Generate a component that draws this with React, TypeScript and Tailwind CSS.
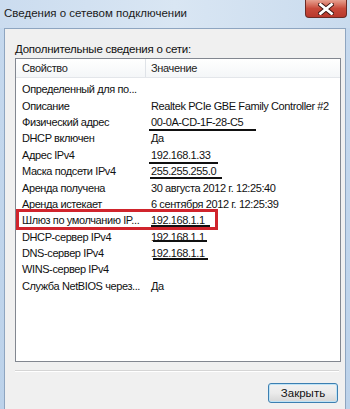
import React from "react";

const rows: [string, string][] = [
  ["Определенный для по...", ""],
  ["Описание", "Realtek PCIe GBE Family Controller #2"],
  ["Физический адрес", "00-0A-CD-1F-28-C5"],
  ["DHCP включен", "Да"],
  ["Адрес IPv4", "192.168.1.33"],
  ["Маска подсети IPv4", "255.255.255.0"],
  ["Аренда получена", "30 августа 2012 г. 12:25:40"],
  ["Аренда истекает", "6 сентября 2012 г. 12:25:39"],
  ["Шлюз по умолчанию IP...", "192.168.1.1"],
  ["DHCP-сервер IPv4", "192.168.1.1"],
  ["DNS-сервер IPv4", "192.168.1.1"],
  ["WINS-сервер IPv4", ""],
  ["Служба NetBIOS через...", "Да"],
];

export default function App() {
  return (
    <div
      className="relative w-[350px] h-[409px] overflow-hidden bg-gradient-to-b from-[#c6d9ee] to-[#bcd2ea] text-[#111]"
      style={{ fontFamily: '"Liberation Sans", Arial, sans-serif' }}
    >
      {/* title bar */}
      <div className="h-[28px] flex items-center pl-[4px] bg-gradient-to-r from-[#cbdcef] via-[#d9e6f3] to-[#c9dbee]">
        <span className="text-[11.5px] text-[#1b1b1b] tracking-[0px]">Сведения о сетевом подключении</span>
      </div>
      {/* close button */}
      <div className="absolute left-[305px] top-0 w-[42px] h-[18px] rounded-b-[4px] border border-t-0 border-[#6b2a24] bg-gradient-to-b from-[#e6a090] via-[#c84a3b] to-[#b8382c] flex items-center justify-center">
        <svg width="16" height="12" viewBox="0 0 16 12">
          <path d="M2.5 1.5 L13.5 10.5 M13.5 1.5 L2.5 10.5" stroke="#3a1410" strokeWidth="4.6" strokeLinecap="square" />
          <path d="M2.5 1.5 L13.5 10.5 M13.5 1.5 L2.5 10.5" stroke="#ffffff" strokeWidth="2.8" strokeLinecap="square" />
        </svg>
      </div>

      {/* client area */}
      <div className="absolute left-[4px] right-[4px] top-[28px] bottom-0 border border-b-0 border-[#8ea5c0] bg-[#f0f0f0]">
        <div className="flex flex-col h-full pl-[10px] pr-[5px]">
          <div className="text-[11.5px] mt-[11px] h-[18px] leading-[18px] tracking-[-0.25px]">Дополнительные сведения о сети:</div>
          <div className="relative h-[304px] w-[326px] border border-[#828790] bg-white">
            {/* header */}
            <div className="flex h-[19px] border-b border-[#e3e6ea] bg-gradient-to-b from-[#ffffff] to-[#f4f6f8] text-[11px] text-[#222] tracking-[-0.35px]">
              <div className="w-[130px] shrink-0 pl-[6px] leading-[19px] border-r border-[#dfe3e8]">Свойство</div>
              <div className="pl-[5px] leading-[19px]">Значение</div>
            </div>
            <div className="pt-[3px]">
              {rows.map(([k, v], i) => (
                <div key={i} className="flex h-[16.4px] items-center text-[11px] leading-[16px] whitespace-nowrap tracking-[-0.4px]">
                  <div className="w-[130px] shrink-0 pl-[6px]">{k}</div>
                  <div className="pl-[5px]">{v}</div>
                </div>
              ))}
            </div>

            {/* annotations */}
            <div className="absolute left-[133px] top-[70px] w-[107px] h-[2px] bg-[#111]" />
            <div className="absolute left-[133px] top-[103px] w-[69px] h-[2px] bg-[#111]" />
            <div className="absolute left-[134px] top-[118px] w-[72px] h-[2px] bg-[#111]" />
            <div className="absolute left-[135px] top-[166px] w-[59px] h-[2px] bg-[#111]" />
            <div className="absolute left-[137px] top-[181px] w-[54px] h-[2px] bg-[#111]" />
            <div className="absolute left-[137px] top-[199px] w-[55px] h-[2px] bg-[#111]" />
            <div className="absolute left-[0px] top-[150px] w-[202px] h-[21px] border-[3px] border-[#d0242c]" />
          </div>
          <div className="mt-[8px] h-[2px] w-[324px] border-t border-[#d5d5d5] border-b border-b-white" />
          <div className="flex justify-end pr-[2px] mt-[11px]">
            <button className="w-[70px] h-[20px] rounded-[3px] border border-[#3c7fb1] bg-gradient-to-b from-[#f2f2f2] via-[#ebebeb] to-[#d6d6d6] text-[11.5px] text-[#111] leading-[18px] shadow-[inset_0_0_0_1px_#bfe3f6]">
              Закрыть
            </button>
          </div>
        </div>
      </div>
    </div>
  );
}
